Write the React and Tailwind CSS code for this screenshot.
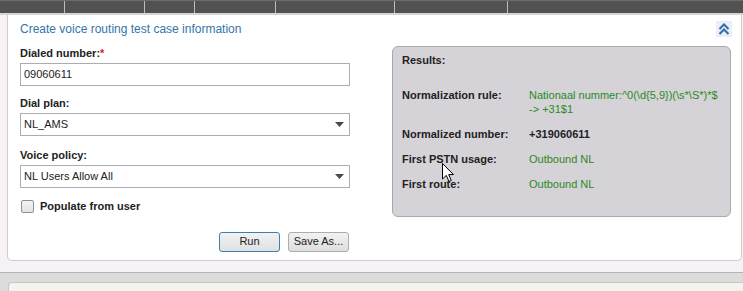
import React from "react";

const tabs = [65, 80, 50, 81, 119, 113];

const results = [
  { label: "Normalization rule:", value: ["Nationaal nummer:^0(\\d{5,9})(\\s*\\S*)*$", "-> +31$1"], tone: "green" },
  { label: "Normalized number:", value: ["+319060611"], tone: "dark" },
  { label: "First PSTN usage:", value: ["Outbound NL"], tone: "green" },
  { label: "First route:", value: ["Outbound NL"], tone: "green" },
];

function SelectBox({ value }) {
  return (
    <div className="flex h-[23px] items-center justify-between border border-[#abadb3] bg-white pl-[3px] pr-[5px]">
      <span>{value}</span>
      <svg width="9" height="5" viewBox="0 0 9 5">
        <path d="M0 0 L9 0 L4.5 5 Z" fill="#4a4a4a" />
      </svg>
    </div>
  );
}

function Field({ label, required, children, top }) {
  return (
    <div className={top}>
      <div className="mb-[3px] font-bold leading-[14px]">
        {label}
        {required && <span className="text-[#e02020]">*</span>}
      </div>
      {children}
    </div>
  );
}

export default function App() {
  return (
    <div className="relative h-[291px] w-[743px] overflow-hidden bg-[#f6f2f6] font-['Liberation_Sans',Arial,sans-serif] text-[11px] text-[#222]">
      {/* top bar */}
      <div className="flex h-[13px] border-t border-[#6c6c6c] bg-[#525252]">
        {tabs.map((w, i) => (
          <div key={i} className="h-full border-r border-[#bdbdbd]" style={{ width: w }} />
        ))}
        <div className="flex-1" />
      </div>
      <div className="h-[2px] bg-[#d5d5d5]" />

      {/* panel */}
      <div className="mr-[1px] ml-[7px] h-[246px] rounded-b-[5px] border-x border-b border-[#cdcdcd] bg-white pt-[6px] pr-[9px] pl-[12px]">
        <div className="flex h-[16px] items-center justify-between">
          <span className="text-[12px] leading-[16px] text-[#3574a8]">Create voice routing test case information</span>
          <div className="flex h-[16px] w-[16px] items-center justify-center bg-[#eceef7]">
            <svg width="16" height="16" viewBox="0 0 16 16" fill="none" stroke="#2f6ea6" strokeWidth="2">
              <polyline points="3.5,8 8,3.5 12.5,8" />
              <polyline points="3.5,13 8,8.5 12.5,13" />
            </svg>
          </div>
        </div>

        <div className="mt-[9px] flex">
          {/* form */}
          <div className="w-[330px]">
            <Field label="Dialed number:" required>
              <div className="flex h-[23px] items-center border border-[#abadb3] bg-white pl-[3px]">09060611</div>
            </Field>
            <Field label="Dial plan:" top="mt-[10px]">
              <SelectBox value="NL_AMS" />
            </Field>
            <Field label="Voice policy:" top="mt-[12px]">
              <SelectBox value="NL Users Allow All" />
            </Field>

            <label className="mt-[10px] flex items-center gap-[6px] pl-[1px]">
              <span className="h-[13px] w-[13px] rounded-[2px] border border-[#8e8f8f] bg-gradient-to-b from-[#f4f4f4] to-[#e2e2e2]" />
              <span className="font-bold">Populate from user</span>
            </label>

            <div className="mt-[17px] flex justify-end gap-[8px] pr-[1px]">
              <button className="h-[20px] w-[61px] rounded-[3px] border border-[#3c7fb1] bg-gradient-to-b from-[#f2f2f2] to-[#e0e0e0] text-[11px] leading-none text-[#222]">
                Run
              </button>
              <button className="h-[20px] w-[61px] rounded-[3px] border border-[#adadad] bg-gradient-to-b from-[#f2f2f2] to-[#dedede] text-[11px] leading-none text-[#222]">
                Save As...
              </button>
            </div>
          </div>

          {/* results */}
          <div className="ml-[42px] h-[171px] w-[339px] rounded-[6px] border border-[#a9a9a9] bg-[#d5d3d7] pt-[6px] pl-[9px]">
            <div className="mb-[21px] font-bold leading-[14px]">Results:</div>
            <div className="flex flex-col gap-[11px]">
              {results.map((r) => (
                <div key={r.label} className="flex leading-[14px]">
                  <div className="w-[127px] shrink-0 font-bold">{r.label}</div>
                  <div className={r.tone === "green" ? "text-[#2a8a24]" : "font-bold text-[#222]"}>
                    {r.value.map((line) => (
                      <div key={line}>{line}</div>
                    ))}
                  </div>
                </div>
              ))}
            </div>
          </div>
        </div>
      </div>

      {/* lower area */}
      <div className="mt-[11px] h-[1px] bg-[#b3b3b3]" />
      <div className="h-[9px] bg-[#dcdcdc]" />
      <div className="flex h-[10px] bg-[#dcdcdc]">
        <div className="ml-[8px] flex-1 rounded-tl-[4px] border-t border-l border-[#c6c6c6] bg-[#f5f3ee]" />
      </div>

      {/* mouse cursor */}
      <svg className="absolute top-[163px] left-[442px]" width="13" height="20" viewBox="0 0 13 20">
        <path d="M0.5 0.5 L0.5 16 L4.3 12.4 L7 18.5 L9.3 17.5 L6.7 11.6 L11.5 11.6 Z" fill="#fff" stroke="#000" strokeWidth="1" />
      </svg>
    </div>
  );
}
